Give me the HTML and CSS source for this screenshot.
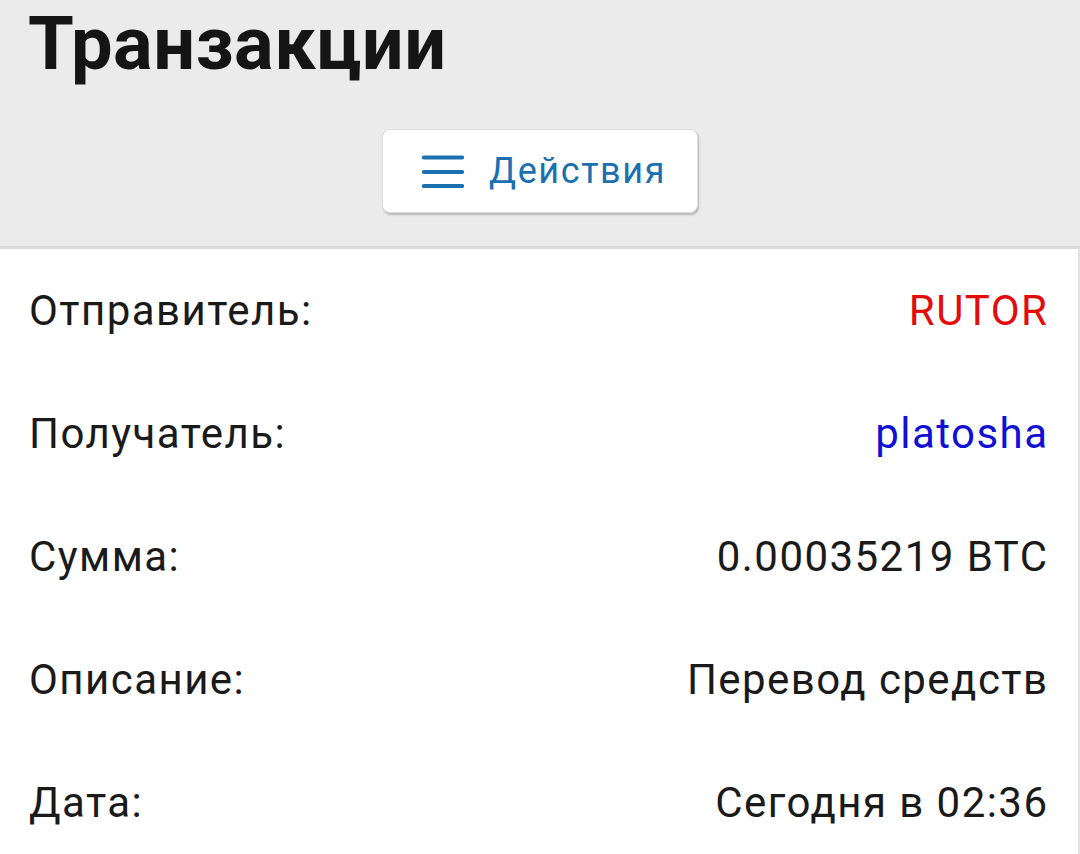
FILE: index.html
```html
<!DOCTYPE html>
<html lang="ru">
<head>
<meta charset="utf-8">
<title>Транзакции</title>
<link rel="stylesheet" href="styles.css">
</head>
<body>
<header class="head">
  <h1 class="title">Транзакции</h1>
  <div class="actions-wrap">
    <button class="actions" type="button">
      <svg class="burger" width="42" height="34" viewBox="0 0 42 34" aria-hidden="true">
        <path d="M2 3.5H40M2 18H40M2 32H40" stroke="#1a70b0" stroke-width="4.2" stroke-linecap="round" fill="none"/>
      </svg>
      <span class="actions-label">Действия</span>
    </button>
  </div>
</header>
<main class="details">
  <div class="row"><span class="label">Отправитель:</span><span class="value red">RUTOR</span></div>
  <div class="row"><span class="label">Получатель:</span><span class="value blue">platosha</span></div>
  <div class="row"><span class="label">Сумма:</span><span class="value">0.00035219 BTC</span></div>
  <div class="row"><span class="label">Описание:</span><span class="value">Перевод средств</span></div>
  <div class="row"><span class="label">Дата:</span><span class="value">Сегодня в 02:36</span></div>
</main>
</body>
</html>
```
FILE: styles.css
```css
html, body {
  margin: 0;
  padding: 0;
  background: #ffffff;
}
body {
  font-family: Roboto, "Noto Sans", sans-serif;
  color: #1a1a1a;
  width: 1080px;
  overflow: hidden;
}
.head {
  background: #ebebeb;
  height: 246px;
  border-bottom: 3px solid #dcdcdc;
  box-sizing: content-box;
}
.title {
  margin: 0;
  padding: 0 0 0 28px;
  font-size: 74px;
  font-weight: 700;
  line-height: 87px;
  letter-spacing: 0.5px;
  color: #151515;
}
.actions-wrap {
  display: flex;
  justify-content: center;
  padding-top: 42px;
}
.actions {
  display: flex;
  align-items: center;
  width: 316px;
  height: 84px;
  padding: 0 0 0 39px;
  box-sizing: border-box;
  background: #ffffff;
  border: 1px solid #dddddd;
  border-radius: 8px;
  box-shadow: 1px 2px 2px rgba(0, 0, 0, 0.22);
  font-family: Roboto, "Noto Sans", sans-serif;
  cursor: pointer;
}
.burger {
  display: block;
}
.actions-label {
  margin-left: 25px;
  font-size: 36px;
  letter-spacing: 1.6px;
  color: #1a70b0;
  line-height: 1;
}
.details {
  border-right: 2px solid #e2e2e2;
  min-height: 605px;
}
.row {
  display: flex;
  justify-content: space-between;
  align-items: center;
  height: 123px;
  padding: 0 31px 0 29px;
  font-size: 42px;
  line-height: 50px;
  letter-spacing: 1.45px;
}
.value {
  margin-right: -1.45px;
}
.red {
  color: #e40b0b;
}
.blue {
  color: #1010d4;
}
```
